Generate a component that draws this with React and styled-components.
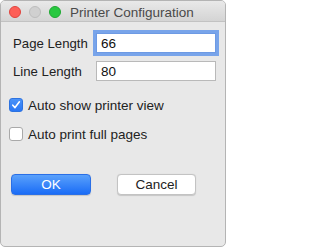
import React, { useState } from 'react';
import styled, { createGlobalStyle } from 'styled-components';

const Global = createGlobalStyle`
  html, body { margin: 0; padding: 0; background: #fff; }
  body { font-family: "Liberation Sans", Arial, sans-serif; -webkit-font-smoothing: antialiased; }
`;

const Window = styled.div`
  width: 226px;
  height: 247px;
  box-sizing: border-box;
  border: 1px solid #b4b4b4;
  border-radius: 5px;
  background: #e8e8e8;
  overflow: hidden;
  display: flex;
  flex-direction: column;
`;

const TitleBar = styled.div`
  height: 21px;
  box-sizing: border-box;
  flex: none;
  display: flex;
  align-items: center;
  padding: 2px 0 0 8px;
  background: linear-gradient(#e9e9e9, #d4d4d4);
  border-bottom: 1px solid #c2c2c2;
`;

const Lights = styled.div`
  display: flex;
  flex: none;
  gap: 8px;
`;

const Light = styled.span`
  flex: none;
  width: 12px;
  height: 12px;
  border-radius: 50%;
  box-sizing: border-box;
  background: ${({ $color }) => $color};
  border: 0.5px solid ${({ $edge }) => $edge};
`;

const Title = styled.div`
  margin-left: 9px;
  font-size: 13.5px;
  color: #4a4a4a;
  white-space: nowrap;
`;

const Body = styled.div`
  flex: 1;
  padding: 11px 9px 0 12px;
  display: flex;
  flex-direction: column;
`;

const FieldRow = styled.div`
  display: flex;
  align-items: center;
  height: 20px;
  margin-bottom: ${({ $gap }) => $gap}px;
`;

const Label = styled.label`
  width: 83px;
  font-size: 13.2px;
  color: #222;
  white-space: nowrap;
`;

const Input = styled.input`
  width: 120px;
  height: 20px;
  box-sizing: border-box;
  border: 1px solid #b9b9b9;
  background: #fff;
  font-family: "Liberation Sans", Arial, sans-serif;
  font-size: 13.5px;
  color: #111;
  padding: 1px 4px 0;
  margin: 0;
  outline: none;
  box-shadow: ${({ $focused }) => ($focused ? '0 0 0 3px #78a4ea' : 'none')};
  border-color: ${({ $focused }) => ($focused ? '#6d9ae4' : '#b9b9b9')};
`;

const CheckRow = styled.label`
  display: flex;
  align-items: center;
  height: 14px;
  margin-left: -4px;
  margin-top: ${({ $top }) => $top}px;
  font-size: 13.5px;
  color: #222;
  white-space: nowrap;
`;

const Box = styled.span`
  flex: none;
  width: 14px;
  height: 14px;
  box-sizing: border-box;
  border-radius: 3px;
  margin-right: 5px;
  display: flex;
  align-items: center;
  justify-content: center;
  background: ${({ $on }) => ($on ? 'linear-gradient(#4b93f8, #2a77f4)' : '#fff')};
  border: 1px solid ${({ $on }) => ($on ? '#2e73e0' : '#a9a9a9')};
`;

const Buttons = styled.div`
  display: flex;
  margin-top: 33px;
  margin-left: -2px;
  gap: 26px;
`;

const Button = styled.button`
  width: ${({ $w }) => $w}px;
  height: 21px;
  box-sizing: border-box;
  border-radius: 4px;
  font-family: "Liberation Sans", Arial, sans-serif;
  font-size: 13.5px;
  padding: 0;
  border: 1px solid ${({ $primary }) => ($primary ? '#2a6fe6' : '#c3c3c3')};
  background: ${({ $primary }) => ($primary ? 'linear-gradient(#5aa1fb, #1a6cf6)' : '#fff')};
  color: ${({ $primary }) => ($primary ? '#fff' : '#222')};
  box-shadow: 0 0.5px 1px rgba(0, 0, 0, 0.15);
`;

const Check = () => (
  <svg width="10" height="10" viewBox="0 0 10 10">
    <path d="M1.8 5.2 L4 7.6 L8.4 1.8" fill="none" stroke="#fff" strokeWidth="1.6" strokeLinecap="round" strokeLinejoin="round" />
  </svg>
);

export default function App() {
  const [page, setPage] = useState('66');
  const [line, setLine] = useState('80');
  const [showView, setShowView] = useState(true);
  const [fullPages, setFullPages] = useState(false);

  return (
    <>
      <Global />
      <Window>
        <TitleBar>
          <Lights>
            <Light $color="#fd5f57" $edge="#e0443e" />
            <Light $color="#d0d0d0" $edge="#bdbdbd" />
            <Light $color="#28c840" $edge="#1fa832" />
          </Lights>
          <Title>Printer Configuration</Title>
        </TitleBar>
        <Body>
          <FieldRow $gap={8}>
            <Label>Page Length</Label>
            <Input $focused value={page} onChange={e => setPage(e.target.value)} />
          </FieldRow>
          <FieldRow $gap={0}>
            <Label>Line Length</Label>
            <Input value={line} onChange={e => setLine(e.target.value)} />
          </FieldRow>
          <CheckRow $top={17} onClick={() => setShowView(!showView)}>
            <Box $on={showView}>{showView && <Check />}</Box>
            Auto show printer view
          </CheckRow>
          <CheckRow $top={15} onClick={() => setFullPages(!fullPages)}>
            <Box $on={fullPages}>{fullPages && <Check />}</Box>
            Auto print full pages
          </CheckRow>
          <Buttons>
            <Button $primary $w={80}>OK</Button>
            <Button $w={79}>Cancel</Button>
          </Buttons>
        </Body>
      </Window>
    </>
  );
}
